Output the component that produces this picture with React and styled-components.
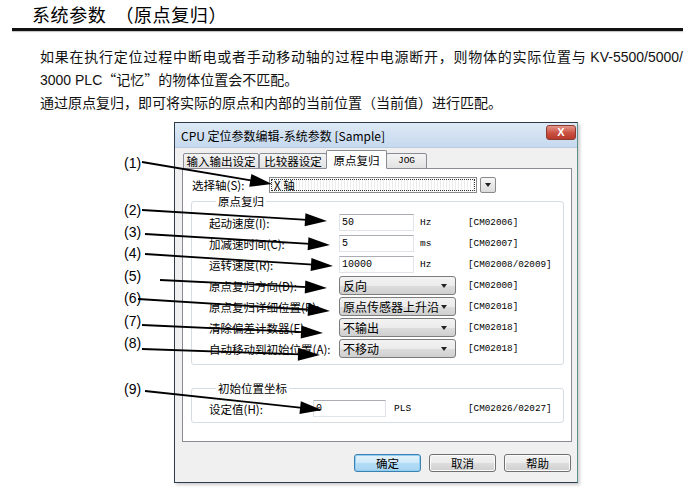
import React from 'react';
import styled, { createGlobalStyle } from 'styled-components';

const GlobalStyle = createGlobalStyle`
  html, body { margin: 0; padding: 0; background: #fff; }
  body {
    font-family: "Noto Sans CJK SC", "Liberation Sans", sans-serif;
    color: #000;
    width: 695px;
    height: 490px;
    overflow: hidden;
  }
`;

const Page = styled.div`
  position: relative;
  width: 695px;
  height: 490px;
`;

const Heading = styled.h1`
  margin: 0;
  padding: 3px 0 3px 32px;
  font-size: 18px;
  font-weight: 400;
  line-height: 22px;
  letter-spacing: 0.6px;
`;

const HeadGap = styled.span`
  display: inline-block;
  width: 9px;
`;

const Rule = styled.div`
  margin: 0 12px;
  height: 3px;
  background: #111;
  box-shadow: 0 1px 1px rgba(0, 0, 0, 0.25);
`;

const Intro = styled.div`
  margin: 14px 12px 0 40px;
  font-size: 14px;
  line-height: 22px;
  color: #111;
`;

const Line = styled.div`
  white-space: nowrap;
  text-align: ${p => (p.$justify ? 'justify' : 'left')};
  text-align-last: ${p => (p.$justify ? 'justify' : 'auto')};
`;

const Latin = styled.span`
  font-family: "Liberation Sans", Arial, sans-serif;
  font-size: 14px;
`;

const Dialog = styled.div`
  margin: 9px 0 0 174px;
  width: 404px;
  height: 361px;
  box-sizing: border-box;
  border: 1px solid #2f3b48;
  border-right-color: #5a8f8a;
  background: #f0f0f0;
  display: flex;
  flex-direction: column;
  box-shadow: 2px 2px 3px rgba(0, 0, 0, 0.2);
  font-size: 11.5px;
`;

const TitleBar = styled.div`
  flex: none;
  height: 24px;
  display: flex;
  align-items: center;
  justify-content: space-between;
  padding: 0 1px 0 6px;
  background: linear-gradient(#dde9f6, #c6d9ee);
  border-bottom: 1px solid #b9cce2;
  font-size: 12px;
`;

const CloseBtn = styled.div`
  align-self: flex-start;
  margin-top: 2px;
  width: 30px;
  height: 15px;
  box-sizing: border-box;
  border: 1px solid #8b3a30;
  border-radius: 3px;
  background: linear-gradient(#e5968b, #c9503f 55%, #b83a2b);
  color: #fff;
  font: bold 11px/13px "Liberation Sans", sans-serif;
  text-align: center;
`;

const Body = styled.div`
  flex: 1;
  display: flex;
  flex-direction: column;
  padding: 2px 5px 0 7px;
`;

const TabRow = styled.div`
  flex: none;
  height: 19px;
  display: flex;
  align-items: flex-end;
  padding-left: 1px;
  position: relative;
  z-index: 1;
`;

const Tab = styled.div`
  height: ${p => (p.$active ? '19px' : '16px')};
  width: ${p => p.$w}px;
  box-sizing: border-box;
  margin: ${p => (p.$active ? '0 -1px' : '0')};
  border: 1px solid #898c95;
  border-bottom: ${p => (p.$active ? '1px solid #fff' : '1px solid #898c95')};
  border-radius: 2px 2px 0 0;
  background: ${p => (p.$active ? '#fff' : 'linear-gradient(#f4f4f4, #e2e2e2)')};
  display: flex;
  align-items: center;
  justify-content: center;
  font-size: 11.5px;
  line-height: 14px;
  position: relative;
  z-index: ${p => (p.$active ? 2 : 1)};
`;

const MonoSmall = styled.span`
  font-family: "Liberation Mono", monospace;
  font-size: 9.5px;
`;

const Panel = styled.div`
  flex: none;
  height: 274px;
  margin-top: -1px;
  border: 1px solid #898c95;
  background: #fff;
  padding: 8px 0 0 9px;
  box-sizing: border-box;
`;

const AxisRow = styled.div`
  display: flex;
  align-items: center;
  height: 16px;
`;

const FieldLabel = styled.div`
  width: ${p => p.$w}px;
  flex: none;
  white-space: nowrap;
  font-size: 11.5px;
  line-height: 14px;
`;

const AxisField = styled.div`
  width: 208px;
  height: 16px;
  box-sizing: border-box;
  border: 1px solid #8a8a8a;
  background: repeating-linear-gradient(90deg, #fff 0 2px, #ececec 2px 3px);
  outline: 1px dotted #333;
  outline-offset: -3px;
  padding-left: 4px;
  font-size: 11.5px;
  line-height: 14px;
`;

const DropBtn = styled.div`
  width: 16px;
  height: 16px;
  margin-left: 3px;
  box-sizing: border-box;
  border: 1px solid #8a8a8a;
  border-radius: 2px;
  background: linear-gradient(#f6f6f6, #dcdcdc);
  display: flex;
  align-items: center;
  justify-content: center;
`;

const Caret = styled.span`
  width: 0;
  height: 0;
  border-left: 3.5px solid transparent;
  border-right: 3.5px solid transparent;
  border-top: 4px solid #222;
`;

const Group = styled.fieldset`
  margin: ${p => p.$mt}px 0 0 -1px;
  width: 373px;
  box-sizing: border-box;
  border: 1px solid #d5dce3;
  border-radius: 3px;
  padding: ${p => p.$pad};
  min-width: 0;
`;

const Legend = styled.legend`
  margin-left: 7px;
  padding: 0 2px;
  font-size: 11.5px;
  line-height: 14px;
`;

const FormRow = styled.div`
  display: flex;
  align-items: center;
  height: 21px;
`;

const Slot = styled.div`
  width: ${p => p.$w}px;
  flex: none;
  display: flex;
  align-items: center;
`;

const TextBox = styled.div`
  width: ${p => p.$w}px;
  height: 17px;
  box-sizing: border-box;
  border: 1px solid #e0e4e8;
  border-top-color: #abadb3;
  background: #fff;
  padding-left: 2px;
  font-family: "Liberation Mono", monospace;
  font-size: 10px;
  line-height: 15px;
`;

const Unit = styled.span`
  margin-left: ${p => p.$ml}px;
  font-family: "Liberation Mono", monospace;
  font-size: 9.5px;
`;

const Combo = styled.div`
  width: 117px;
  height: 19px;
  box-sizing: border-box;
  border: 1px solid #7c7c7c;
  border-radius: 3px;
  background: linear-gradient(#f3f3f3, #ebebeb 50%, #dddddd 51%, #cfcfcf);
  display: flex;
  align-items: center;
  justify-content: space-between;
  padding: 0 8px 0 3px;
  font-size: 12px;
  line-height: 15px;
`;

const Reg = styled.span`
  font-family: "Liberation Mono", monospace;
  font-size: 9.3px;
  white-space: nowrap;
`;

const ButtonRow = styled.div`
  flex: none;
  display: flex;
  justify-content: flex-end;
  gap: 8px;
  padding: 12px 1px 0 0;
`;

const Button = styled.div`
  width: 67px;
  height: 18px;
  box-sizing: border-box;
  border: 1px solid ${p => (p.$primary ? '#3c7fb1' : '#707070')};
  border-radius: 3px;
  background: ${p =>
    p.$primary
      ? 'linear-gradient(#e5f3fb, #cde8f9 50%, #b3dcf6 51%, #a8d4f1)'
      : 'linear-gradient(#f2f2f2, #ebebeb 50%, #dddddd 51%, #cfcfcf)'};
  box-shadow: ${p => (p.$primary ? 'inset 0 0 0 1px #8fd0f3' : 'inset 0 0 0 1px #fcfcfc')};
  display: flex;
  align-items: center;
  justify-content: center;
  font-size: 11.5px;
`;

const Callout = styled.span`
  position: absolute;
  font-family: "Liberation Sans", Arial, sans-serif;
  font-size: 14px;
  line-height: 16px;
  z-index: 3;
`;

const Overlay = styled.svg`
  position: absolute;
  left: 0;
  top: 0;
  pointer-events: none;
  z-index: 4;
`;

const arrows = [
  { n: 1, lx: 124, ly: 155, x1: 142, y1: 162, x2: 272, y2: 184 },
  { n: 2, lx: 124, ly: 202, x1: 142, y1: 210, x2: 327, y2: 221 },
  { n: 3, lx: 124, ly: 224, x1: 145, y1: 234, x2: 330, y2: 245 },
  { n: 4, lx: 124, ly: 245, x1: 145, y1: 254, x2: 333, y2: 266 },
  { n: 5, lx: 124, ly: 268, x1: 160, y1: 280, x2: 327, y2: 288 },
  { n: 6, lx: 124, ly: 290, x1: 138, y1: 299, x2: 330, y2: 311 },
  { n: 7, lx: 124, ly: 313, x1: 142, y1: 325, x2: 323, y2: 333 },
  { n: 8, lx: 124, ly: 335, x1: 142, y1: 349, x2: 320, y2: 355 },
  { n: 9, lx: 124, ly: 381, x1: 145, y1: 391, x2: 322, y2: 410 },
];

function Arrow({ x1, y1, x2, y2 }) {
  const dx = x2 - x1;
  const dy = y2 - y1;
  const len = Math.hypot(dx, dy);
  const ux = dx / len;
  const uy = dy / len;
  const hl = 22;
  const hw = 6.5;
  const bx = x2 - ux * hl;
  const by = y2 - uy * hl;
  const pts = `${x2},${y2} ${bx - uy * hw},${by + ux * hw} ${bx + uy * hw},${by - ux * hw}`;
  return (
    <g>
      <line x1={x1} y1={y1} x2={bx + ux * 2} y2={by + uy * 2} stroke="#000" strokeWidth="1.8" />
      <polygon points={pts} fill="#000" />
    </g>
  );
}

const homeRows = [
  { label: '起动速度', key: 'I', value: '50', unit: 'Hz', reg: '[CM02006]' },
  { label: '加减速时间', key: 'C', value: '5', unit: 'ms', reg: '[CM02007]' },
  { label: '运转速度', key: 'R', value: '10000', unit: 'Hz', reg: '[CM02008/02009]' },
  { label: '原点复归方向', key: 'D', select: '反向', reg: '[CM02000]' },
  { label: '原点复归详细位置', key: 'P', select: '原点传感器上升沿', reg: '[CM02018]' },
  { label: '清除偏差计数器', key: 'E', select: '不输出', reg: '[CM02018]' },
  { label: '自动移动到初始位置', key: 'A', select: '不移动', reg: '[CM02018]' },
];

export default function App() {
  return (
    <Page>
      <GlobalStyle />
      <Heading>系统参数<HeadGap />（原点复归）</Heading>
      <Rule />
      <Intro>
        <Line $justify>
          如果在执行定位过程中断电或者手动移动轴的过程中电源断开，则物体的实际位置与 <Latin>KV-5500/5000/</Latin>
        </Line>
        <Line>
          <Latin>3000 PLC</Latin>“记忆”的物体位置会不匹配。
        </Line>
        <Line>通过原点复归，即可将实际的原点和内部的当前位置（当前值）进行匹配。</Line>
      </Intro>

      <Dialog>
        <TitleBar>
          <span>CPU 定位参数编辑-系统参数 [Sample]</span>
          <CloseBtn>X</CloseBtn>
        </TitleBar>
        <Body>
          <TabRow>
            <Tab $w={76}>输入输出设定</Tab>
            <Tab $w={68}>比较器设定</Tab>
            <Tab $w={61} $active>原点复归</Tab>
            <Tab $w={41}><MonoSmall>JOG</MonoSmall></Tab>
          </TabRow>
          <Panel>
            <AxisRow>
              <FieldLabel $w={77}>选择轴(S):</FieldLabel>
              <AxisField>X 轴</AxisField>
              <DropBtn><Caret /></DropBtn>
            </AxisRow>

            <Group $mt={1} $pad="4px 0 5px 17px">
              <Legend>原点复归</Legend>
              {homeRows.map(r => (
                <FormRow key={r.label}>
                  <FieldLabel $w={130}>{r.label}({r.key}):</FieldLabel>
                  <Slot $w={129}>
                    {r.select ? (
                      <Combo>
                        <span>{r.select}</span>
                        <Caret />
                      </Combo>
                    ) : (
                      <>
                        <TextBox $w={75}>{r.value}</TextBox>
                        <Unit $ml={6}>{r.unit}</Unit>
                      </>
                    )}
                  </Slot>
                  <Reg>{r.reg}</Reg>
                </FormRow>
              ))}
            </Group>

            <Group $mt={16} $pad="3px 0 3px 17px">
              <Legend>初始位置坐标</Legend>
              <FormRow>
                <FieldLabel $w={104}>设定值(H):</FieldLabel>
                <Slot $w={155}>
                  <TextBox $w={73}>0</TextBox>
                  <Unit $ml={8}>PLS</Unit>
                </Slot>
                <Reg>[CM02026/02027]</Reg>
              </FormRow>
            </Group>
          </Panel>
          <ButtonRow>
            <Button $primary>确定</Button>
            <Button>取消</Button>
            <Button>帮助</Button>
          </ButtonRow>
        </Body>
      </Dialog>

      {arrows.map(a => (
        <Callout key={a.n} style={{ left: a.lx, top: a.ly }}>({a.n})</Callout>
      ))}
      <Overlay width="695" height="490" viewBox="0 0 695 490">
        {arrows.map(a => (
          <Arrow key={a.n} {...a} />
        ))}
      </Overlay>
    </Page>
  );
}
